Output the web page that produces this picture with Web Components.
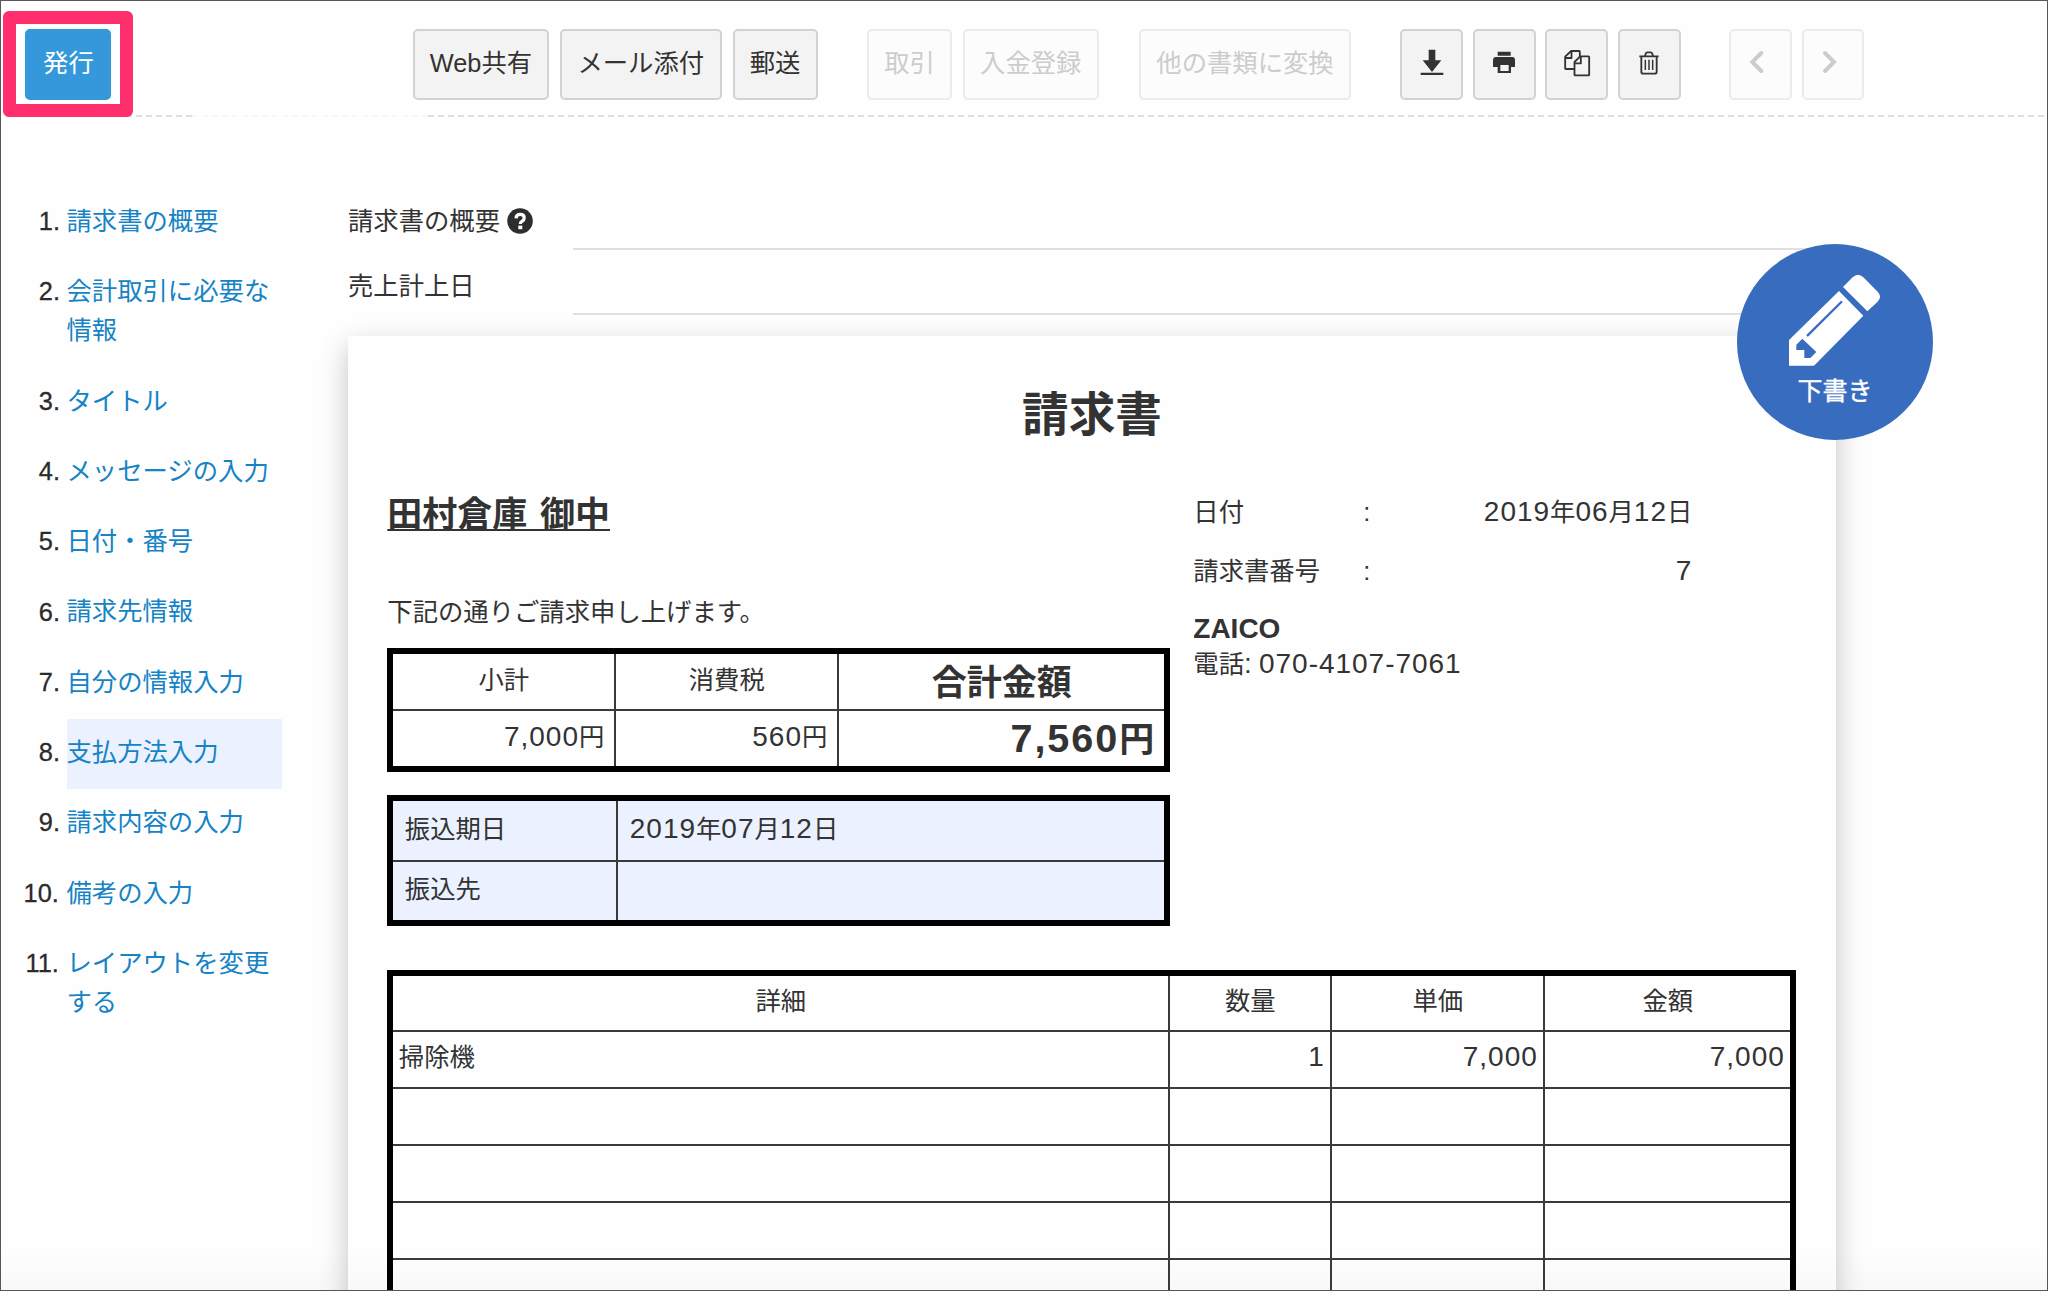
<!DOCTYPE html>
<html lang="ja">
<head>
<meta charset="utf-8">
<title>請求書</title>
<style>
html,body{margin:0;padding:0}
body{width:2048px;height:1291px;overflow:hidden;background:#fefefe;color:#333;text-autospace:no-autospace;
font-family:"Liberation Sans","Noto Sans CJK JP",sans-serif;font-size:25.35px;line-height:39.4px}
</style>
</head>
<body>
<app-window>
  <tool-bar slot="bar">
    <tool-group style="--ml:25.3px"><tool-button primary highlight style="--w:86.2px">発行</tool-button></tool-group>
    <tool-group style="--ml:301.5px;--gap:11px">
      <tool-button style="--w:136px">Web共有</tool-button>
      <tool-button style="--w:161.6px">メール添付</tool-button>
      <tool-button style="--w:85px">郵送</tool-button>
    </tool-group>
    <tool-group style="--ml:49.4px;--gap:10.5px">
      <tool-button disabled style="--w:85.3px">取引</tool-button>
      <tool-button disabled style="--w:136px">入金登録</tool-button>
    </tool-group>
    <tool-group style="--ml:40px"><tool-button disabled style="--w:212.5px">他の書類に変換</tool-button></tool-group>
    <tool-group style="--ml:49px;--gap:9.7px">
      <tool-button style="--w:62.8px"><tool-icon name="download"></tool-icon></tool-button>
      <tool-button style="--w:62.8px"><tool-icon name="print"></tool-icon></tool-button>
      <tool-button style="--w:62.8px"><tool-icon name="copy"></tool-icon></tool-button>
      <tool-button style="--w:62.8px"><tool-icon name="trash"></tool-icon></tool-button>
    </tool-group>
    <tool-group style="--ml:48.7px;--gap:9.7px">
      <tool-button disabled style="--w:62.8px"><tool-icon name="prev"></tool-icon></tool-button>
      <tool-button disabled style="--w:62.8px"><tool-icon name="next"></tool-icon></tool-button>
    </tool-group>
  </tool-bar>

  <step-list slot="side">
    <step-item no="1.">請求書の概要</step-item>
    <step-item no="2.">会計取引に必要な情報</step-item>
    <step-item no="3.">タイトル</step-item>
    <step-item no="4.">メッセージの入力</step-item>
    <step-item no="5.">日付・番号</step-item>
    <step-item no="6.">請求先情報</step-item>
    <step-item no="7.">自分の情報入力</step-item>
    <step-item no="8." active>支払方法入力</step-item>
    <step-item no="9.">請求内容の入力</step-item>
    <step-item no="10." wide>備考の入力</step-item>
    <step-item no="11." wide>レイアウトを変更する</step-item>
  </step-list>

  <form-row help>請求書の概要</form-row>
  <form-row>売上計上日</form-row>

  <invoice-paper>
    <span slot="title">請求書</span>
    <span slot="customer">田村倉庫 御中</span>
    <span slot="message">下記の通りご請求申し上げます。</span>

    <ruled-grid slot="totals" style="--cols:221px 221px 325px;--rows:55px 55px">
      <grid-cell align="center">小計</grid-cell>
      <grid-cell align="center">消費税</grid-cell>
      <grid-cell align="center" big>合計金額</grid-cell>
      <grid-cell align="right"><wide-digits>7,000</wide-digits>円</grid-cell>
      <grid-cell align="right"><wide-digits>560</wide-digits>円</grid-cell>
      <grid-cell align="right" big><wide-digits big>7,560</wide-digits>円</grid-cell>
    </ruled-grid>

    <ruled-grid slot="payment" style="--cols:223px 546px;--rows:59px 58px;--cell:#ebf1fe;--px:11.5px">
      <grid-cell>振込期日</grid-cell>
      <grid-cell><wide-digits>2019</wide-digits>年<wide-digits>07</wide-digits>月<wide-digits>12</wide-digits>日</grid-cell>
      <grid-cell>振込先</grid-cell>
      <grid-cell></grid-cell>
    </ruled-grid>

    <meta-row slot="meta" label="日付"><wide-digits>2019</wide-digits>年<wide-digits>06</wide-digits>月<wide-digits>12</wide-digits>日</meta-row>
    <meta-row slot="meta" label="請求書番号"><wide-digits>7</wide-digits></meta-row>
    <span slot="company">ZAICO</span>
    <span slot="phone">電話<wide-digits>: 070-4107-7061</wide-digits></span>

    <ruled-grid slot="lines" style="--cols:775px 160px 211px 245px;--rows:54px repeat(6,55px);--px:5.5px">
      <grid-cell align="center">詳細</grid-cell><grid-cell align="center">数量</grid-cell><grid-cell align="center">単価</grid-cell><grid-cell align="center">金額</grid-cell>
      <grid-cell>掃除機</grid-cell><grid-cell align="right"><wide-digits>1</wide-digits></grid-cell><grid-cell align="right"><wide-digits>7,000</wide-digits></grid-cell><grid-cell align="right"><wide-digits>7,000</wide-digits></grid-cell>
      <grid-cell></grid-cell><grid-cell></grid-cell><grid-cell></grid-cell><grid-cell></grid-cell>
      <grid-cell></grid-cell><grid-cell></grid-cell><grid-cell></grid-cell><grid-cell></grid-cell>
      <grid-cell></grid-cell><grid-cell></grid-cell><grid-cell></grid-cell><grid-cell></grid-cell>
      <grid-cell></grid-cell><grid-cell></grid-cell><grid-cell></grid-cell><grid-cell></grid-cell>
      <grid-cell></grid-cell><grid-cell></grid-cell><grid-cell></grid-cell><grid-cell></grid-cell>
    </ruled-grid>
  </invoice-paper>

  <status-badge slot="badge">下書き</status-badge>
</app-window>

<script>
// Leading whitespace is trimmed so inline elements add no gap before their slot.
const define = (name, render) => customElements.define(name, class extends HTMLElement {
  constructor() {
    super();
    this.attachShadow({ mode: 'open' }).innerHTML = render(this).trim();
  }
});

define('app-window', () => `
  <style>
    :host{display:flex;flex-direction:column;position:relative;width:2048px;height:1291px;overflow:hidden}
    .cols{display:flex;align-items:flex-start;flex:1;min-height:0}
    main{width:1488.5px;padding-top:67px;margin-left:65.5px}
    .badge{position:absolute;left:1737px;top:244px}
    .frame{position:absolute;inset:0;border:1px solid #575559;pointer-events:none;
      background:linear-gradient(rgba(0,0,0,0),rgba(0,0,0,.025)) bottom/100% 42px no-repeat}
  </style>
  <slot name="bar"></slot>
  <div class="cols"><slot name="side"></slot><main><slot></slot></main></div>
  <div class="badge"><slot name="badge"></slot></div>
  <div class="frame"></div>`);

define('tool-bar', () => `
  <style>
    :host{display:flex;flex-direction:column;height:118px;box-sizing:border-box;padding-top:29px;flex:none}
    .row{display:flex;height:70.6px}
    .rule{display:flex;margin:15.8px 4px 0 6px}
    i{border-top:2px dashed #dedede}
    i:nth-child(1){width:186px}
    i:nth-child(2){width:236px;border-color:#f8f8f8}
    i:nth-child(3){flex:1}
  </style>
  <div class="row"><slot></slot></div>
  <div class="rule"><i></i><i></i><i></i></div>`);

define('tool-group', () => `
  <style>:host{display:flex;gap:var(--gap,0);margin-left:var(--ml)}</style><slot></slot>`);

define('tool-button', el => `
  <style>
    :host{display:block;position:relative;width:var(--w)}
    button{display:flex;align-items:center;justify-content:center;width:100%;height:100%;box-sizing:border-box;
      margin:0;padding:0 0 1.5px;font:inherit;color:#333;background:#f3f3f3;border:2px solid #d2d2d2;border-radius:5px;white-space:nowrap}
    :host([disabled]) button{color:#ccc;background:#fcfcfc;border-color:#ebebeb}
    :host([primary]) button{color:#fff;background:#3498db;border-color:#3498db}
    .mark{position:absolute;left:-22.3px;top:-17.6px;width:129.6px;height:105.2px;box-sizing:border-box;
      border:13.6px solid #ff2e6c;border-radius:6px}
  </style>
  <button ${el.hasAttribute('disabled') ? 'disabled' : ''}><slot></slot></button>
  ${el.hasAttribute('highlight') ? '<div class="mark"></div>' : ''}`);

const ICONS = {
  download: ['62 76 90 90', '<path fill="currentColor" d="M97 78h20v32h18l-28 35-28-35h18zM73 147h68v7H73z"/>'],
  print: ['279 76 90 90', '<path fill="currentColor" fill-rule="evenodd" d="M305 84h39v12h-39zM300 100h49q8 0 8 9v21h-12v18h-40v-18h-14v-21q0-9 9-9zM313 124v18h25v-18z"/>'],
  copy: ['496.5 76 90 90', '<g fill="#f3f3f3" stroke="currentColor" stroke-width="5.5" stroke-linejoin="round"><path d="M524 82h24q2 0 2 2v52h-42q-2 0-2-2v-35z"/><path fill="none" d="M525 83v20h-18"/><path d="M551 98h25q2 0 2 2v53q0 2-2 2h-40q-2 0-2-2v-38z"/><path fill="none" d="M553 99v20h-18"/></g>'],
  trash: ['714 76 90 90', '<g fill="none" stroke="currentColor" stroke-width="5.5" stroke-linejoin="round"><path d="M730 98h58M736 98v46q0 6 6 6h34q6 0 6-6V98M747 97l2-7q1-4 5-4h10q4 0 5 4l2 7"/><path stroke-width="4.5" d="M748 108v31M759 108v31M770 108v31"/></g>'],
  prev: ['1049 76 90 90', '<path fill="none" stroke="currentColor" stroke-width="12" stroke-linecap="round" stroke-linejoin="miter" d="M1095 88l-27 27 27 27"/>'],
  next: ['1266 76 90 90', '<path fill="none" stroke="currentColor" stroke-width="12" stroke-linecap="round" stroke-linejoin="miter" d="M1287 88l27 27-27 27"/>']
};
define('tool-icon', el => {
  const [box, body] = ICONS[el.getAttribute('name')];
  return `<style>:host{display:block;height:30px;margin-top:1.5px}svg{display:block}</style>
    <svg width="30" height="30" viewBox="${box}">${body}</svg>`;
});

define('step-list', () => `
  <style>:host{display:flex;flex-direction:column;width:282px;padding-top:69.2px;flex:none}</style><slot></slot>`);

define('step-item', el => `
  <style>
    :host{display:flex}
    b{width:60px;margin-right:6.5px;text-align:right;padding-top:14.5px;font-weight:400;color:#2b2b2b;-webkit-text-stroke:.3px;flex:none}
    :host([wide]) b{width:58.8px;margin-right:7.7px}
    a{flex:1;padding:14.4px 0 16.5px;color:#1583c5}
    :host([active]) a{background:#ebf1fe}
  </style>
  <b>${el.getAttribute('no')}</b><a><slot></slot></a>`);

define('form-row', el => `
  <style>
    :host{display:flex;height:65px}
    label{display:flex;align-items:center;width:225px;padding-top:9px;box-sizing:border-box}
    label span{margin-left:.5px}
    svg{margin:-2px 0 0 7px}
    .field{flex:1;border-bottom:2px solid #e0e0e0}
  </style>
  <label><span><slot></slot></span>${el.hasAttribute('help') ? `
    <svg width="26" height="26" viewBox="0 0 26 26"><circle cx="13" cy="13" r="12.8" fill="#2d2d2d"/>
      <path d="M9 10.4q.2-4 4.2-4 4 0 4 3.5 0 2-2 3.2-1.9 1.1-1.9 3" fill="none" stroke="#fff" stroke-width="3.2"/><rect x="11.3" y="17.6" width="4" height="3.6" fill="#fff"/></svg>` : ''}
  </label><div class="field"></div>`);

define('invoice-paper', () => `
  <style>
    :host{display:block;box-sizing:border-box;height:1100px;margin-top:21px;padding:49px 0 0 39.8px;background:#fefefe;
      box-shadow:0 10px 27px rgba(0,0,0,.23)}
    h1{margin:0 39.3px 48px 0;text-align:center;font-size:46.6px;line-height:60px}
    .top{display:flex;height:476.5px}
    .left{display:flex;flex-direction:column;width:806px}
    h2{margin:0;font-size:35px;line-height:44px;word-spacing:3px;text-decoration:underline;
      text-decoration-thickness:2px;text-underline-offset:2px;text-decoration-skip-ink:none}
    p{margin:55px 0 16px;line-height:40px}
    .pay{margin-top:23px}
    .right{display:flex;flex-direction:column;width:499px}
    .company{font-weight:700;font-size:28px;line-height:35px;margin-top:1px}
    .phone{line-height:36px}
  </style>
  <h1><slot name="title"></slot></h1>
  <div class="top">
    <div class="left">
      <h2><slot name="customer"></slot></h2>
      <p><slot name="message"></slot></p>
      <div><slot name="totals"></slot></div>
      <div class="pay"><slot name="payment"></slot></div>
    </div>
    <div class="right">
      <slot name="meta"></slot>
      <div class="company"><slot name="company"></slot></div>
      <div class="phone"><slot name="phone"></slot></div>
    </div>
  </div>
  <slot name="lines"></slot>`);

define('meta-row', el => `
  <style>
    :host{display:flex;height:58.7px;line-height:38px}
    span{width:170px}
    div{flex:1;text-align:right}
  </style>
  <span>${el.getAttribute('label')}</span><span style="width:6px">:</span><div><slot></slot></div>`);

define('ruled-grid', () => `
  <style>
    :host{display:inline-grid;vertical-align:top;grid-template-columns:var(--cols);grid-template-rows:var(--rows);
      gap:2px;background:#3a3a3a;border:6px solid #000}
  </style><slot></slot>`);

define('grid-cell', () => `
  <style>
    :host{display:flex;align-items:center;box-sizing:border-box;min-width:0;padding:0 var(--px,10px) 2px;background:var(--cell,#fefefe)}
    :host([align=center]){justify-content:center}
    :host([align=right]){justify-content:flex-end}
    :host([big]){font-size:35px;font-weight:700;padding:3px 10px 0}
  </style><span><slot></slot></span>`);

define('wide-digits', () => `
  <style>
    :host{font-size:1.105em;letter-spacing:.035em;word-spacing:-.09em;line-height:0}
    :host([big]){font-size:1.13em;letter-spacing:.05em}
  </style><slot></slot>`);

define('status-badge', () => `
  <style>
    :host{display:flex;flex-direction:column;align-items:center;width:196px;height:196px;border-radius:50%;background:#376cbe;color:#fff}
    svg{display:block;margin-top:28px}
    span{margin-top:6px;font-size:25px;-webkit-text-stroke:.4px}
  </style>
  <svg width="96" height="94" viewBox="380 156 288 282">
    <path fill="#fff" d="M548 201l29-29q16-16 32 0l43 43q14 14 0 30l-31 29zM536 213l73 74-148 150h-75v-77z"/>
    <path fill="#376cbe" d="M426 356l-18 18v16h24v24h18l18-18z"/>
    <path fill="none" stroke="#376cbe" stroke-width="7" stroke-linecap="round" d="M442 346l101-100"/>
  </svg>
  <span><slot></slot></span>`);
</script>
</body>
</html>
